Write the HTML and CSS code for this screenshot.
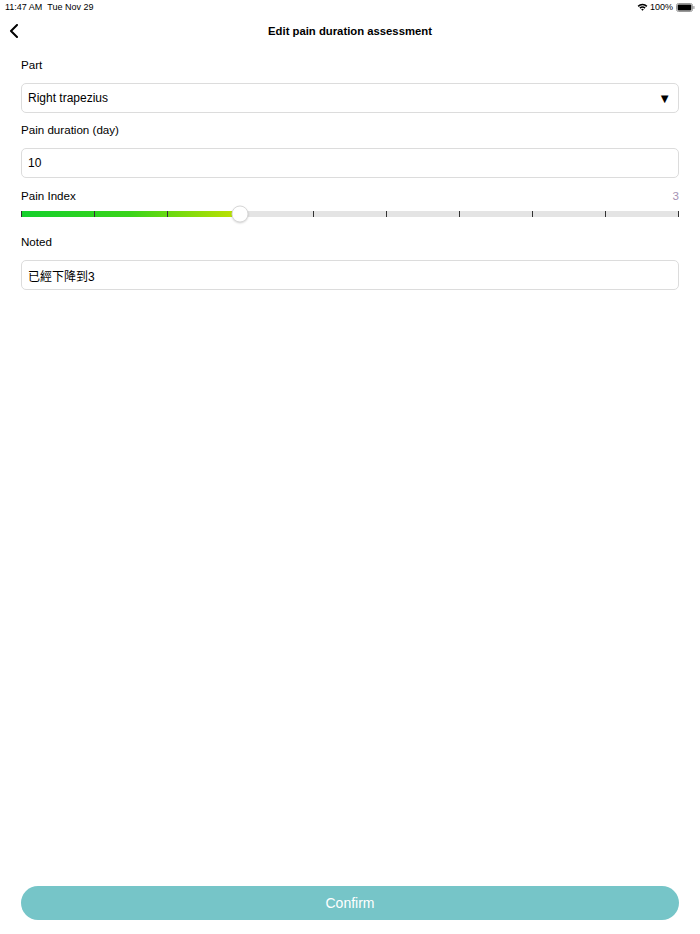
FILE: index.html
```html
<!DOCTYPE html>
<html>
<head>
<meta charset="utf-8">
<link rel="stylesheet" href="styles.css">
</head>
<body>
<div class="page">
  <div class="status">
    <span class="status-left">11:47 AM&nbsp;&nbsp;Tue Nov 29</span>
    <span class="status-right">
      <svg class="wifi" width="11" height="8" viewBox="0 0 11 8"><path d="M0.6 2.8 A7 7 0 0 1 10.4 2.8 L9.3 3.9 A5.4 5.4 0 0 0 1.7 3.9 Z" fill="#000"/><path d="M2.4 4.6 A4.5 4.5 0 0 1 8.6 4.6 L7.5 5.7 A3 3 0 0 0 3.5 5.7 Z" fill="#000"/><path d="M4.2 6.4 A1.9 1.9 0 0 1 6.8 6.4 L5.5 7.7 Z" fill="#000"/></svg>
      <span class="pct">100%</span>
      <svg class="battery" width="19" height="9" viewBox="0 0 19 9"><rect x="0.5" y="0.5" width="16" height="8" rx="2" fill="none" stroke="#999" stroke-width="1"/><rect x="1.6" y="1.6" width="13.8" height="5.8" rx="1" fill="#000"/><rect x="17.3" y="3" width="1.2" height="3" rx="0.5" fill="#999"/></svg>
    </span>
  </div>
  <div class="nav">
    <svg class="back" width="10" height="14" viewBox="0 0 10 14"><path d="M8 1 L2 7 L8 13" fill="none" stroke="#000" stroke-width="2" stroke-linecap="round" stroke-linejoin="round"/></svg>
    <div class="title">Edit pain duration assessment</div>
  </div>
  <div class="form">
    <div class="field">
      <div class="label">Part</div>
      <div class="box select"><span>Right trapezius</span><span class="arrow">▼</span></div>
    </div>
    <div class="field">
      <div class="label">Pain duration (day)</div>
      <div class="box">10</div>
    </div>
    <div class="field">
      <div class="label row"><span>Pain Index</span><span class="value">3</span></div>
      <div class="slider">
        <div class="track">
          <div class="fill" style="width:33.333%"></div>
          <div class="ticks"><i></i><i></i><i></i><i></i><i></i><i></i><i></i><i></i><i></i><i></i></div>
          <div class="thumb" style="left:33.333%"></div>
        </div>
      </div>
    </div>
    <div class="field">
      <div class="label">Noted</div>
      <div class="box cjk">已經下降到3</div>
    </div>
  </div>
  <div class="footer">
    <div class="confirm">Confirm</div>
  </div>
</div>
</body>
</html>
```

FILE: styles.css
```css
html, body {
  margin: 0;
  padding: 0;
  background: #fff;
}
body {
  font-family: "Liberation Sans", Arial, "Noto Sans CJK TC", sans-serif;
  color: #000;
}
.page {
  width: 700px;
  height: 934px;
  display: flex;
  flex-direction: column;
}
.status {
  height: 14px;
  display: flex;
  justify-content: space-between;
  align-items: center;
  padding: 0 5px;
  font-size: 9px;
}
.status-right {
  display: flex;
  align-items: center;
  gap: 2px;
}
.status-right .pct {
  margin-right: 1px;
}
.nav {
  height: 34px;
  display: flex;
  align-items: center;
  justify-content: center;
  position: relative;
}
.back {
  position: absolute;
  left: 9px;
  top: 10px;
}
.title {
  font-size: 11.3px;
  font-weight: bold;
}
.form {
  padding: 9px 21px 0;
  display: flex;
  flex-direction: column;
}
.field {
  display: flex;
  flex-direction: column;
  margin-bottom: 9px;
}
.label {
  font-size: 11.6px;
  line-height: 16px;
  margin-bottom: 10px;
}
.label.row {
  display: flex;
  justify-content: space-between;
  margin-top: 1px;
  margin-bottom: 0;
}
.value {
  color: #a592b4;
}
.box {
  height: 28px;
  border: 1px solid #dcdcdc;
  border-radius: 5px;
  display: flex;
  align-items: center;
  padding: 0 6px;
  font-size: 12px;
}
.box.cjk {
  font-family: "Liberation Sans", "Noto Sans CJK TC", sans-serif;
}
.select {
  justify-content: space-between;
}
.arrow {
  font-size: 13px;
  margin-right: 1px;
}
.slider {
  height: 20px;
  display: flex;
  align-items: center;
  margin-bottom: 1px;
}
.track {
  position: relative;
  width: 100%;
  height: 6px;
  background: #e4e4e4;
}
.fill {
  height: 100%;
  background: linear-gradient(to right, #14d02c 0%, #3ad41a 50%, #c3e200 100%);
}
.ticks {
  position: absolute;
  inset: 0;
  display: flex;
  justify-content: space-between;
}
.ticks i {
  display: block;
  width: 1px;
  height: 100%;
  background: #333;
}
.thumb {
  position: absolute;
  top: 50%;
  width: 15px;
  height: 15px;
  border-radius: 50%;
  background: #fff;
  border: 1px solid #d8d8d8;
  box-shadow: 0 1px 2px rgba(0,0,0,0.15);
  transform: translate(-50%, -50%);
}
.footer {
  margin-top: auto;
  padding: 0 21px 14px;
}
.confirm {
  height: 34px;
  border-radius: 17px;
  background: #76c5c8;
  color: #fff;
  font-size: 14px;
  display: flex;
  align-items: center;
  justify-content: center;
}
```
